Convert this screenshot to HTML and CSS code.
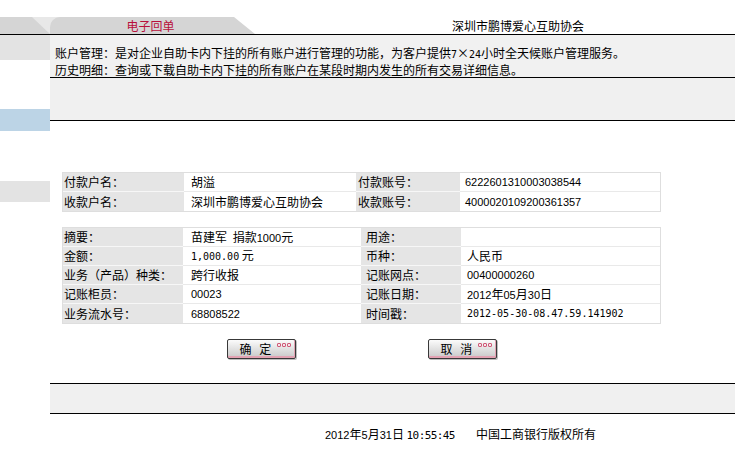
FILE: index.html
```html
<!DOCTYPE html>
<html lang="zh-CN">
<head>
<meta charset="utf-8">
<title>电子回单</title>
<link rel="stylesheet" href="styles.css">
</head>
<body>
<div class="tabbar">
  <div class="tab-stub"></div>
  <div class="tab-active">电子回单</div>
  <div class="org-title">深圳市鹏博爱心互助协会</div>
</div>
<div class="layout">
  <aside class="sidebar">
    <div class="sb-grey"></div>
    <div class="sb-blue"></div>
    <div class="sb-grey2"></div>
  </aside>
  <main class="main">
    <div class="desc">
      <div class="desc-line">账户管理：是对企业自助卡内下挂的所有账户进行管理的功能，为客户提供<span class="mono">7</span>×<span class="mono">24</span>小时全天候账户管理服务。</div>
      <div class="desc-line">历史明细：查询或下载自助卡内下挂的所有账户在某段时期内发生的所有交易详细信息。</div>
    </div>
    <div class="band"></div>
    <div class="receipt">
      <table class="grid g1">
        <colgroup><col class="c1"><col class="c2"><col class="c3"><col class="c4"></colgroup>
        <tr><td class="lbl">付款户名：</td><td class="val">胡溢</td><td class="lbl lbl2">付款账号：</td><td class="val val2 num">6222601310003038544</td></tr>
        <tr><td class="lbl">收款户名：</td><td class="val">深圳市鹏博爱心互助协会</td><td class="lbl lbl2">收款账号：</td><td class="val val2 num">4000020109200361357</td></tr>
      </table>
      <table class="grid g2">
        <colgroup><col class="c1"><col class="c2"><col class="c3"><col class="c4"></colgroup>
        <tr><td class="lbl">摘要：</td><td class="val"><span class="wsp">苗建军 捐款</span><span class="num">1000</span>元</td><td class="lbl lbl2">用途：</td><td class="val val2"></td></tr>
        <tr><td class="lbl">金额：</td><td class="val"><span class="mono">1,000.00</span> 元</td><td class="lbl lbl2">币种：</td><td class="val val2">人民币</td></tr>
        <tr><td class="lbl">业务（产品）种类：</td><td class="val">跨行收报</td><td class="lbl lbl2">记账网点：</td><td class="val val2 num">00400000260</td></tr>
        <tr><td class="lbl">记账柜员：</td><td class="val num">00023</td><td class="lbl lbl2">记账日期：</td><td class="val val2"><span class="num">2012</span>年<span class="num">05</span>月<span class="num">30</span>日</td></tr>
        <tr><td class="lbl">业务流水号：</td><td class="val num">68808522</td><td class="lbl lbl2">时间戳：</td><td class="val val2 mono">2012-05-30-08.47.59.141902</td></tr>
      </table>
      <div class="actions">
        <button class="btn" type="button"><span class="btn-text">确 定</span><span class="dots"><i></i><i></i><i></i></span></button>
        <button class="btn" type="button"><span class="btn-text">取 消</span><span class="dots"><i></i><i></i><i></i></span></button>
      </div>
    </div>
    <div class="band band-bottom"></div>
    <div class="footer">
      <span class="ftime"><span class="num">2012</span>年<span class="num">5</span>月<span class="num">31</span>日 <span class="mono time">10:55:45</span></span><span class="copy">中国工商银行版权所有</span>
    </div>
  </main>
</div>
</body>
</html>
```
FILE: styles.css
```css
* { box-sizing: border-box; }

html, body {
  margin: 0;
  padding: 0;
  background: #fff;
}

body {
  width: 735px;
  font-family: "Noto Sans CJK SC", "Noto Sans", sans-serif;
  font-size: 12px;
  line-height: 14px;
  color: #000;
  overflow: hidden;
}

.num {
  font-family: "Liberation Sans", Arial, sans-serif;
  font-size: 11px;
}

.mono {
  font-family: "DejaVu Sans Mono", monospace;
  font-size: 10px;
}

.wsp {
  word-spacing: 3px;
}

/* ---------- tab bar ---------- */
.tabbar {
  display: flex;
  height: 18px;
  margin-top: 17px;
  border-bottom: 1px solid #000;
  background: linear-gradient(to right, #e8e8e8 0, #e8e8e8 60px, transparent 60px);
}

.tab-stub {
  width: 50px;
  background: #d5d5d5;
  clip-path: polygon(0 0, 32px 0, 50px 100%, 0 100%);
}

.tab-active {
  width: 205px;
  background: #d5d5d5;
  border-top-left-radius: 10px;
  clip-path: polygon(0 0, 184px 0, 100% 100%, 0 100%);
  color: #b8103c;
  text-align: center;
  padding-right: 4px;
  line-height: 17px;
}

.org-title {
  margin-left: 197px;
  line-height: 17px;
  white-space: nowrap;
}

/* ---------- layout ---------- */
.layout {
  display: flex;
}

.sidebar {
  width: 50px;
  flex: none;
  display: flex;
  flex-direction: column;
}

.sb-grey {
  height: 25px;
  background: #e3e3e3;
}

.sb-blue {
  height: 22px;
  margin-top: 49px;
  background: #bcd4e6;
}

.sb-grey2 {
  height: 21px;
  margin-top: 50px;
  background: #e3e3e3;
}

.main {
  flex: 1;
  min-width: 0;
}

.desc {
  height: 43px;
  padding: 9px 0 0 5px;
  background: #f1f1f1;
  border-bottom: 1px solid #000;
  white-space: nowrap;
}

.desc-line {
  height: 17px;
  line-height: 17px;
}

.band {
  height: 43px;
  background: #f0f0f0;
  border-bottom: 1px solid #000;
}

.band-bottom {
  height: 31px;
  margin-top: 24px;
  border-top: 1px solid #000;
}

/* ---------- receipt tables ---------- */
.receipt {
  padding: 51px 0 0 12px;
}

.grid {
  width: 599px;
  table-layout: fixed;
  border-collapse: separate;
  border-spacing: 0;
  border: 1px solid #dedede;
}

.g2 {
  margin-top: 15px;
}

.g1 .c1 { width: 121px; }
.g1 .c2 { width: 172px; }
.g1 .c3 { width: 104px; }
.g1 .c4 { width: 200px; }

.g2 .c1 { width: 120px; }
.g2 .c2 { width: 178px; }
.g2 .c3 { width: 100px; }
.g2 .c4 { width: 199px; }

.grid td {
  height: 19px;
  padding: 0;
  white-space: nowrap;
  vertical-align: middle;
  border-bottom: 1px solid #e9e9e9;
}

.grid tr:last-child td {
  border-bottom: 0;
}

.lbl {
  background: #e5e5e5;
  padding-left: 1px !important;
  border-bottom-color: #f7f7f7 !important;
}

.g1 .lbl2 { padding-left: 2px !important; }
.g2 .lbl2 { padding-left: 5px !important; }

.val {
  background: #fff;
  padding-left: 7px !important;
}

.g2 .val { padding-left: 8px !important; }
.g1 .val2 { padding-left: 5px !important; }
.g2 .val2 { padding-left: 6px !important; }

/* ---------- buttons ---------- */
.actions {
  width: 599px;
  margin-top: 15px;
  display: flex;
  justify-content: center;
  gap: 132px;
}

.btn {
  width: 69px;
  height: 20px;
  margin: 0;
  padding: 0 4px 0 12px;
  display: flex;
  align-items: center;
  border: 1px solid #383838;
  border-radius: 2px;
  background: linear-gradient(#fbfbfb 0%, #e4e4e4 45%, #c8c8c8 100%);
  box-shadow: inset 0 -2px 0 #e3a2b3, inset -1px 0 0 #e3a2b3, 1px 1px 0 #bdbdbd;
  font-family: "Noto Sans CJK SC", sans-serif;
  font-size: 12px;
  line-height: 14px;
  color: #000;
  cursor: pointer;
}

.btn-text {
  word-spacing: 5px;
  white-space: nowrap;
}

.dots {
  margin-left: auto;
  align-self: flex-start;
  margin-top: 3px;
  display: flex;
  gap: 1px;
}

.dots i {
  width: 4px;
  height: 4px;
  border: 1px solid #cf5a78;
  border-radius: 1px;
  background: #f6e6ea;
}

/* ---------- footer ---------- */
.footer {
  margin-top: 13px;
  padding-left: 275px;
  line-height: 14px;
  white-space: nowrap;
  display: flex;
}

.ftime {
  width: 151px;
  flex: none;
}

.time {
  font-size: 11px;
  letter-spacing: -0.6px;
}
```
